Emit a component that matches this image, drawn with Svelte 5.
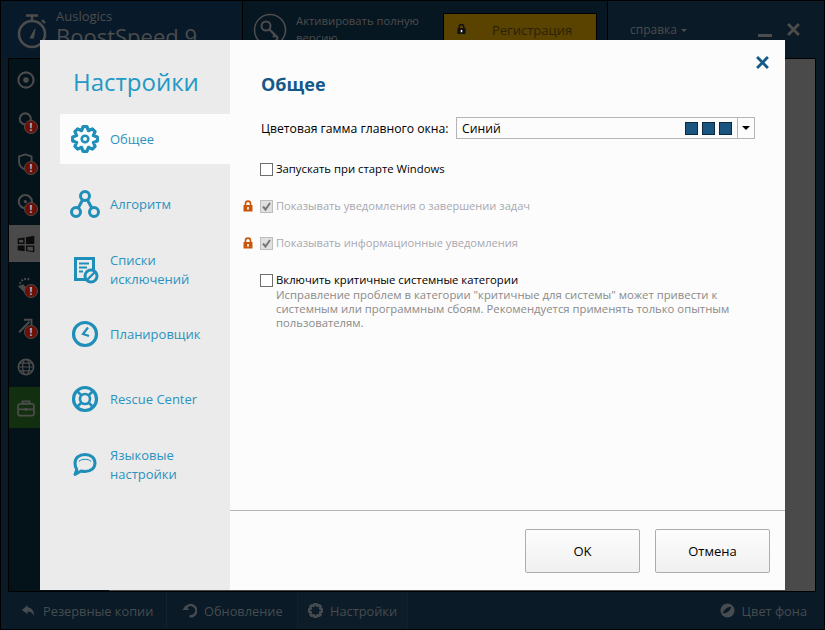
<script>
  function gear(cx, cy, ro, ri, n) {
    let d = "";
    const step = (Math.PI * 2) / n;
    for (let i = 0; i < n; i++) {
      const a = i * step - Math.PI / 2;
      const pts = [
        [ri, a - step * 0.5],
        [ro, a - step * 0.2],
        [ro, a + step * 0.2]
      ];
      for (const [r, t] of pts) {
        d += (d ? "L" : "M") + (cx + r * Math.cos(t)).toFixed(2) + " " + (cy + r * Math.sin(t)).toFixed(2);
      }
    }
    return d + "Z";
  }

  const rail = [
    { icon: "target" },
    { icon: "search", alert: true },
    { icon: "shield", alert: true },
    { icon: "disk", alert: true },
    { icon: "win", active: true },
    { icon: "gauge", alert: true },
    { icon: "wand", alert: true },
    { icon: "globe" },
    { icon: "case", green: true }
  ];

  const nav = [
    { icon: "gear", lines: ["Общее"], selected: true },
    { icon: "nodes", lines: ["Алгоритм"] },
    { icon: "list", lines: ["Списки", "исключений"] },
    { icon: "clock", lines: ["Планировщик"] },
    { icon: "ring", lines: ["Rescue Center"] },
    { icon: "chat", lines: ["Языковые", "настройки"] }
  ];
</script>

{#snippet lock(cls)}
  <svg class={cls} viewBox="0 0 10 12" aria-hidden="true">
    <path d="M2.500 5.500V3.600a2.500 2.500 0 0 1 5 0v1.900" fill="none" stroke="currentColor" stroke-width="1.600" />
    <rect x="0.500" y="5" width="9" height="6.500" fill="currentColor" />
    <rect x="4.200" y="7" width="1.600" height="2.600" fill="#fff" />
  </svg>
{/snippet}

{#snippet railIcon(name)}
  <svg class="rail-svg" viewBox="0 0 26 26" fill="none" stroke="currentColor" stroke-width="2.600" aria-hidden="true">
    {#if name === "target"}
      <circle cx="13" cy="13" r="11" stroke-width="3" />
      <circle cx="13" cy="13" r="4" fill="currentColor" stroke="none" />
    {:else if name === "search"}
      <circle cx="12" cy="10" r="8" stroke-width="3" />
      <path d="M17 16l6 6" stroke-width="3" />
    {:else if name === "shield"}
      <path d="M12 2l9 3v8c0 5-4 9-9 11-5-2-9-6-9-11V5z" />
    {:else if name === "disk"}
      <circle cx="12" cy="11" r="9.500" stroke-width="3" />
      <circle cx="12" cy="11" r="2.500" fill="currentColor" stroke="none" />
    {:else if name === "win"}
      <path d="M1 5l10-1.500v9.500H1zM13 3.200l12-2V13H13zM1 15h10v8.500L1 22zM13 15h12v10l-12-1.800z" fill="#0b0b0b" stroke="none" />
      <path d="M15 17h8v6l-8-1z" fill="#4a4a4a" stroke="none" />
      <path d="M3 7h6v4H3z" fill="#4a4a4a" stroke="none" />
    {:else if name === "gauge"}
      <path d="M4 16a10 10 0 0 1 14-11" stroke-dasharray="2.500 2.200" stroke-width="3" />
      <path d="M2 15l8 8h9l-10-11z" fill="currentColor" stroke="none" />
    {:else if name === "wand"}
      <path d="M3 22L18 7" stroke-width="3" />
      <path d="M10 4h11v11" stroke-width="2.600" />
    {:else if name === "globe"}
      <circle cx="13" cy="13" r="11" stroke-width="2.400" />
      <ellipse cx="13" cy="13" rx="5" ry="11" stroke-width="1.800" />
      <path d="M2 13h22M4 7.500h18M4 18.500h18" stroke-width="1.800" />
    {:else if name === "case"}
      <rect x="1.500" y="7" width="23" height="17" rx="3" />
      <path d="M8 7V3.500h10V7M2 15h22" />
      <rect x="11" y="13" width="4" height="4" fill="currentColor" stroke="none" />
    {/if}
  </svg>
{/snippet}

{#snippet navIcon(name)}
  <svg class="nav-svg" viewBox="0 0 30 30" fill="none" stroke="currentColor" stroke-width="3" aria-hidden="true">
    {#if name === "gear"}
      <path d={gear(15, 15, 12.5, 9, 8)} stroke-width="3.200" stroke-linejoin="round" />
      <circle cx="15" cy="15" r="3.300" stroke-width="2.600" />
    {:else if name === "nodes"}
      <circle cx="15" cy="7" r="4.500" />
      <circle cx="6" cy="23" r="4.500" />
      <circle cx="24" cy="23" r="4.500" />
      <path d="M12.500 11L8.500 18.500M17.500 11l4 7.500" />
    {:else if name === "list"}
      <rect x="5.500" y="4.500" width="18" height="21" stroke-width="3" />
      <path d="M9 9.500h10M9 13.500h8M9 17.500h4" stroke-width="1.800" />
      <circle cx="21" cy="22" r="6" fill="#ebebeb" stroke-width="3" />
      <path d="M17 26l8-8" stroke-width="2.400" />
    {:else if name === "clock"}
      <circle cx="15" cy="15" r="11.500" stroke-width="3.200" />
      <path d="M18 8.500L13 15l6 2" stroke-width="2.200" />
    {:else if name === "ring"}
      <circle cx="15" cy="15" r="11.500" stroke-width="3.200" />
      <circle cx="15" cy="15" r="5" stroke-width="2.600" />
      <path d="M7 7l5 5M23 7l-5 5M7 23l5-5M23 23l-5-5" stroke-width="2.600" />
    {:else if name === "chat"}
      <path d="M15 5.500c6 0 10 3.500 10 8.500s-4 8.500-10 8.500c-1.400 0-2.700-.2-3.900-.5L5 25.500l1.800-5C5.500 19 5 16.500 5 14c0-5 4-8.500 10-8.500z" stroke-width="3" stroke-linejoin="round" />
      <path d="M9 12.500c2-3 10-3 12 0" stroke-width="1.200" />
    {/if}
  </svg>
{/snippet}

<div class="app">
  <header class="top">
    <div class="brand">
      <svg class="watch" viewBox="0 0 30 36" fill="none" stroke="currentColor" aria-hidden="true">
        <circle cx="15" cy="21" r="13" stroke-width="2.600" />
        <path d="M9 2.500h12M15 3v5M25 7l3 3" stroke-width="2.400" />
        <path d="M13 25l5-9-1.500 9z" fill="currentColor" stroke-width="1" />
      </svg>
      <div class="brand-text">
        <div class="brand-small">Auslogics</div>
        <div class="brand-big">BoostSpeed 9</div>
      </div>
    </div>
    <div class="activate">
      <svg class="key" viewBox="0 0 34 34" fill="none" stroke="currentColor" aria-hidden="true">
        <circle cx="17" cy="17" r="15.500" stroke-width="1.600" />
        <circle cx="13" cy="13" r="4.500" stroke-width="2" />
        <path d="M16 16l9 9M22 22l-2 2M25 25l-2 2" stroke-width="2.400" />
      </svg>
      <div class="activate-text">Активировать полную версию</div>
      <div class="reg">
        {@render lock("reg-lock")}
        <span>Регистрация</span>
      </div>
    </div>
    <div class="help">
      <span class="help-link">справка <i class="caret"></i></span>
      <div class="winbtns">
        <i class="min"></i>
        <svg class="winx" viewBox="0 0 12 12" aria-hidden="true"><path d="M1 1l10 10M11 1L1 11" stroke="currentColor" stroke-width="2.600" /></svg>
      </div>
    </div>
  </header>

  <div class="middle">
    <nav class="rail">
      {#each rail as item}
        <div class="rail-item" class:active={item.active} class:green={item.green}>
          {@render railIcon(item.icon)}
          {#if item.alert}<span class="badge">!</span>{/if}
        </div>
      {/each}
    </nav>
    <main class="stage"></main>
  </div>

  <footer class="bottom">
    <div class="tab t1">
      <svg class="tab-svg" viewBox="0 0 16 16" aria-hidden="true"><path d="M7 2L1 7.500 7 12V9c3.500 0 5.500 1.500 7 5 0-5.500-2.500-9-7-9.500z" fill="currentColor" /></svg>
      <span>Резервные копии</span>
    </div>
    <div class="tab t2">
      <svg class="tab-svg" viewBox="0 0 16 16" fill="none" aria-hidden="true"><path d="M4.500 4.500A6 6 0 1 1 8 14" stroke="currentColor" stroke-width="2.600" /><path d="M0.500 7.500h7l-3.500-5z" fill="currentColor" /></svg>
      <span>Обновление</span>
    </div>
    <div class="tab t3">
      <svg class="tab-svg" viewBox="0 0 30 30" fill="none" stroke="currentColor" aria-hidden="true"><path d={gear(15, 15, 13, 10, 8)} stroke-width="5" stroke-linejoin="round" /></svg>
      <span>Настройки</span>
    </div>
    <div class="tab end">
      <svg class="tab-svg" viewBox="0 0 16 16" aria-hidden="true"><circle cx="8" cy="8" r="7.500" fill="currentColor" /><path d="M3 11c1-4 5-7 9-7-1 4-4 7-9 7z" fill="#0a1a26" /></svg>
      <span>Цвет фона</span>
    </div>
  </footer>

  <div class="modal">
    <aside class="side">
      <h1>Настройки</h1>
      <ul>
        {#each nav as item}
          <li class:selected={item.selected}>
            {@render navIcon(item.icon)}
            <span>{#each item.lines as line, i}{#if i}<br />{/if}{line}{/each}</span>
          </li>
        {/each}
      </ul>
    </aside>
    <section class="pane">
      <div class="body">
        <svg class="close" viewBox="0 0 12 12" aria-hidden="true"><path d="M1 1l10 10M11 1L1 11" stroke="currentColor" stroke-width="2.600" /></svg>
        <h2>Общее</h2>
        <div class="color-row">
          <span>Цветовая гамма главного окна:</span>
          <div class="select">
            <span class="select-value">Синий</span>
            <i class="sw"></i><i class="sw"></i><i class="sw last"></i>
            <span class="arrow"><i></i></span>
          </div>
        </div>
        <label class="check r1"><i class="box"></i>Запускать при старте Windows</label>
        <label class="check r2 off">{@render lock("row-lock")}<i class="box on"><svg viewBox="0 0 11 11" aria-hidden="true"><path d="M2 5.500l2.500 3L9 2" fill="none" stroke="currentColor" stroke-width="2" /></svg></i>Показывать уведомления о завершении задач</label>
        <label class="check r3 off">{@render lock("row-lock")}<i class="box on"><svg viewBox="0 0 11 11" aria-hidden="true"><path d="M2 5.500l2.500 3L9 2" fill="none" stroke="currentColor" stroke-width="2" /></svg></i>Показывать информационные уведомления</label>
        <label class="check r4"><i class="box"></i>Включить критичные системные категории</label>
        <p class="note">Исправление проблем в категории "критичные для системы" может привести к системным или программным сбоям. Рекомендуется применять только опытным пользователям.</p>
      </div>
      <div class="actions">
        <button>OK</button>
        <button>Отмена</button>
      </div>
    </section>
  </div>
</div>

<style>
  :global(body) {
    margin: 0;
    background: #0a1a26;
  }
  .app {
    position: relative;
    width: 825px;
    height: 630px;
    overflow: hidden;
    box-sizing: border-box;
    border: 1px solid #000;
    display: flex;
    flex-direction: column;
    background: #0a1a26;
    font-family: "Open Sans", "Noto Sans", sans-serif;
    font-size: 12px;
    color: #4c4c4c;
  }
  .top {
    height: 57px;
    flex: none;
    display: flex;
  }
  .brand {
    width: 242px;
    flex: none;
    display: flex;
    align-items: flex-start;
    gap: 9px;
    padding: 11px 0 0 16px;
    box-sizing: border-box;
    border-right: 1px solid #000;
    background: #081a2a;
  }
  .watch {
    width: 30px;
    height: 36px;
    margin-top: 1px;
  }
  .brand-text {
    margin-top: -3px;
  }
  .brand-small {
    font-size: 13px;
    line-height: 15px;
  }
  .brand-big {
    font-size: 22px;
    line-height: 24px;
    white-space: nowrap;
  }
  .activate {
    width: 365px;
    flex: none;
    display: flex;
    box-sizing: border-box;
    border-right: 1px solid #000;
    padding: 12px 0 0 10px;
    background: #071722;
  }
  .key {
    width: 34px;
    height: 34px;
  }
  .activate-text {
    width: 147px;
    flex: none;
    margin: -1px 0 0 9px;
    font-size: 11.300px;
    line-height: 17px;
  }
  .reg {
    width: 154px;
    height: 40px;
    box-sizing: border-box;
    border: 1px solid #000;
    background: #5a4200;
    color: #111;
    display: flex;
    align-items: flex-start;
    padding: 7px 0 0 13px;
    font-size: 13px;
  }
  .reg span {
    margin-left: 26px;
    color: #2a2208;
  }
  :global(.reg-lock) {
    width: 9px;
    height: 12px;
    margin-top: 2px;
  }
  .help {
    flex: 1;
    display: flex;
    padding: 22px 24px 0 22px;
    background: #0a1a26;
  }
  .help-link {
    font-size: 12px;
    line-height: 14px;
  }
  .caret {
    display: inline-block;
    border: 3.500px solid transparent;
    border-top-color: currentColor;
    border-bottom: 0;
    vertical-align: 2px;
    margin-left: 1px;
  }
  .winbtns {
    margin-left: auto;
    display: flex;
    gap: 15px;
    align-items: flex-start;
  }
  .min {
    display: block;
    width: 14px;
    height: 3px;
    margin-top: 11px;
    background: currentColor;
  }
  .winx {
    width: 13px;
    height: 13px;
  }
  .middle {
    flex: 1;
    display: flex;
    margin: 0 8px 0 7px;
    border: 1px solid #000;
    min-height: 0;
  }
  .rail {
    width: 100px;
    flex: none;
    background: #04121a;
  }
  .rail-item {
    position: relative;
    height: 41px;
    box-sizing: border-box;
    display: flex;
    align-items: center;
    padding-left: 8px;
  }
  .rail-item.active {
    height: 37px;
    margin: 2px 0;
    background: #4a4a4a;
    color: #0b0b0b;
  }
  .rail-item.green {
    background: #12300f;
  }
  .rail-svg {
    width: 18px;
    height: 18px;
  }
  .badge {
    position: absolute;
    left: 15px;
    top: 20px;
    width: 14px;
    height: 14px;
    box-sizing: border-box;
    border: 1px solid #4c4c4c;
    border-radius: 50%;
    background: #6a1006;
    color: #c8b8b8;
    font: bold 10px/12px "Open Sans", sans-serif;
    text-align: center;
  }
  .stage {
    flex: 1;
    background: #4a4a4a;
  }
  .bottom {
    height: 37px;
    flex: none;
    display: flex;
    align-items: stretch;
    font-size: 12.800px;
    color: #464c50;
  }
  .tab {
    display: flex;
    align-items: center;
    gap: 7px;
    box-sizing: border-box;
    padding-left: 20px;
    border-right: 1px solid #0f2230;
  }
  .t1 {
    width: 166px;
  }
  .t2 {
    width: 131px;
    padding-left: 15px;
  }
  .t3 {
    width: 110px;
    padding-left: 10px;
    background: #0c1c28;
  }
  .tab.end {
    margin-left: auto;
    border: 0;
    padding: 0 17px 0 0;
  }
  .tab-svg {
    width: 15px;
    height: 15px;
    flex: none;
  }
  .modal {
    position: absolute;
    left: 39px;
    top: 39px;
    width: 745px;
    height: 550px;
    display: flex;
    background: #fcfcfc;
    color: #000;
  }
  .side {
    width: 190px;
    flex: none;
    background: #ebebeb;
    padding-left: 20px;
    box-sizing: border-box;
  }
  h1 {
    margin: 25px 0 16px 13px;
    font-size: 24px;
    line-height: 33px;
    font-weight: 400;
    color: #2299c6;
  }
  ul {
    list-style: none;
    margin: 0;
    padding: 0;
    display: flex;
    flex-direction: column;
    gap: 15px;
  }
  li {
    height: 50px;
    display: flex;
    align-items: center;
    gap: 10px;
    padding-left: 10px;
    font-size: 13px;
    line-height: 19.500px;
    color: #2a93bf;
  }
  li span {
    padding-top: 2px;
  }
  li.selected {
    background: #fcfcfc;
  }
  .nav-svg {
    width: 30px;
    height: 30px;
    flex: none;
    color: #1f8fba;
  }
  .pane {
    flex: 1;
    display: flex;
    flex-direction: column;
    min-width: 0;
  }
  .body {
    position: relative;
    height: 471px;
    flex: none;
    box-sizing: border-box;
    padding: 31px 30px 0 31px;
    border-bottom: 1px solid #b5b5b5;
  }
  .close {
    position: absolute;
    right: 16px;
    top: 16px;
    width: 13px;
    height: 13px;
    color: #14598a;
  }
  h2 {
    margin: 0 0 20px;
    font-size: 18px;
    line-height: 26px;
    font-weight: 700;
    color: #14598a;
  }
  .color-row {
    display: flex;
    align-items: center;
    justify-content: space-between;
    font-size: 12.200px;
  }
  .select {
    width: 299px;
    height: 22px;
    box-sizing: border-box;
    border: 1px solid #b5b5b5;
    display: flex;
    align-items: center;
    padding-left: 5px;
  }
  .select-value {
    flex: 1;
  }
  .sw {
    width: 13px;
    height: 13px;
    box-sizing: border-box;
    border: 1px solid #0b2a40;
    background: #19557f;
    margin-right: 4px;
  }
  .sw.last {
    margin-right: 5px;
  }
  .arrow {
    width: 16px;
    height: 100%;
    border-left: 1px solid #b5b5b5;
    display: flex;
    align-items: center;
    justify-content: center;
  }
  .arrow i {
    border: 4px solid transparent;
    border-top-color: #000;
    border-bottom: 0;
  }
  .check {
    display: flex;
    align-items: center;
    line-height: 16px;
    margin-left: -1px;
    font-size: 11.300px;
  }
  .r1 {
    margin-top: 22px;
  }
  .r2 {
    margin-top: 21px;
  }
  .r3 {
    margin-top: 21px;
  }
  .r4 {
    margin-top: 21px;
  }
  .off {
    color: #a8a8b0;
    font-size: 11.100px;
  }
  :global(.row-lock) {
    width: 10px;
    height: 12px;
    margin-left: -17px;
    margin-right: 7px;
    color: #c8570b;
    flex: none;
  }
  .box {
    width: 13px;
    height: 13px;
    flex: none;
    box-sizing: border-box;
    border: 1px solid #6e6e6e;
    background: #fff;
    margin-right: 3px;
    display: flex;
    color: #777;
  }
  .box.on {
    background: #e0e0e0;
    border-color: #bdbdbd;
  }
  .note {
    margin: 0 0 0 15px;
    font-size: 11.300px;
    line-height: 14px;
    color: #8a8a8a;
  }
  .actions {
    flex: 1;
    display: flex;
    justify-content: flex-end;
    align-items: flex-start;
    gap: 15px;
    padding: 18px 15px 0 0;
  }
  button {
    width: 115px;
    height: 44px;
    box-sizing: border-box;
    border: 1px solid #adadad;
    border-radius: 2px;
    background: linear-gradient(#fdfdfd, #f0f0f0);
    font: 13px "Open Sans", sans-serif;
    color: #000;
  }
</style>
